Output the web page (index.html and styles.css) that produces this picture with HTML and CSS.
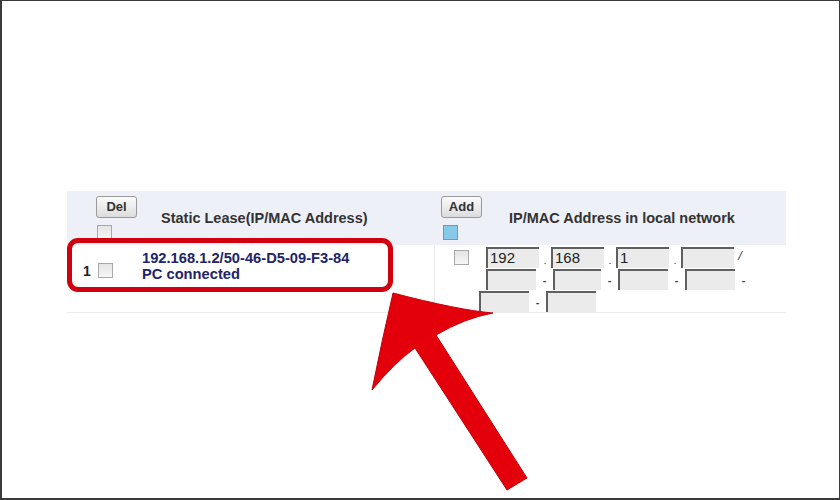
FILE: index.html
```html
<!DOCTYPE html>
<html>
<head>
<meta charset="utf-8">
<link rel="stylesheet" href="styles.css">
</head>
<body>
<div class="frame">
  <div class="table">
    <div class="head">
      <div class="cell left-head">
        <div class="ctrl">
          <span class="btn">Del</span>
          <span class="cb"></span>
        </div>
        <div class="title t1">Static Lease(IP/MAC Address)</div>
      </div>
      <div class="cell right-head">
        <div class="ctrl">
          <span class="btn">Add</span>
          <span class="cb blue"></span>
        </div>
        <div class="title t2">IP/MAC Address in local network</div>
      </div>
    </div>
    <div class="row">
      <div class="cell left-row">
        <span class="num">1</span>
        <span class="cb"></span>
        <div class="lease">
          <div>192.168.1.2/50-46-D5-09-F3-84</div>
          <div>PC connected</div>
        </div>
      </div>
      <div class="cell right-row">
        <span class="cb cb2"></span>
        <div class="fields">
          <div class="line l1">
            <span class="inp">192</span><span class="sep">.</span>
            <span class="inp">168</span><span class="sep">.</span>
            <span class="inp">1</span><span class="sep">.</span>
            <span class="inp"></span><span class="sep slash">/</span>
          </div>
          <div class="line l2">
            <span class="inp w50"></span><span class="sep dash">-</span>
            <span class="inp w48"></span><span class="sep dash">-</span>
            <span class="inp w50"></span><span class="sep dash">-</span>
            <span class="inp w50"></span><span class="sep dash">-</span>
          </div>
          <div class="line l3">
            <span class="inp w50"></span><span class="sep dash">-</span>
            <span class="inp w50"></span>
          </div>
        </div>
      </div>
    </div>
  </div>
  <div class="highlight"></div>
  <svg class="arrow" width="840" height="500" viewBox="0 0 840 500">
    <path d="M393 293 Q458 310 493 313 Q465 318 436 335 L527 478 L507 490 L415 348 Q395 362 372 390 Q382 340 393 293 Z" fill="#e3000b" stroke="#c40008" stroke-width="1"/>
  </svg>
</div>
</body>
</html>
```

FILE: styles.css
```css
html, body {
  margin: 0;
  padding: 0;
  background: #fff;
}
.frame {
  position: relative;
  width: 840px;
  height: 500px;
  box-sizing: border-box;
  border: 1px solid #3a3a3a;
  border-left-width: 2px;
  border-bottom-width: 2px;
  padding: 190px 0 0 65px;
  font-family: "Liberation Sans", Arial, sans-serif;
  overflow: hidden;
}
.table {
  width: 719px;
}
.head {
  display: flex;
  height: 54px;
  background: #eef0f8;
}
.row {
  display: flex;
  height: 67px;
  border-bottom: 1px solid #ececec;
}
.left-head, .left-row {
  width: 367px;
  box-sizing: border-box;
}
.right-head, .right-row {
  flex: 1;
  box-sizing: border-box;
}
.right-row {
  border-left: 1px solid #ececec;
}
.cell {
  display: flex;
}
.left-head {
  padding: 5px 0 0 29px;
}
.right-head {
  padding: 5px 0 0 7px;
}
.ctrl {
  display: flex;
  flex-direction: column;
  align-items: flex-start;
  gap: 7px;
}
.btn {
  display: block;
  box-sizing: border-box;
  width: 41px;
  height: 22px;
  border: 1px solid #9a9a9a;
  border-radius: 3px;
  background: linear-gradient(#fbfbfb, #dcdcdc);
  font-size: 13px;
  font-weight: bold;
  line-height: 19px;
  text-align: center;
  color: #333;
}
.cb {
  display: block;
  box-sizing: border-box;
  width: 15px;
  height: 15px;
  border: 1px solid #a8a8a8;
  background: linear-gradient(#e4e4e4, #f6f6f6);
  margin-left: 1px;
}
.cb.blue {
  margin-left: 2px;
  border-color: #4aa6d4;
  background: #86c9e8;
}
.title {
  align-self: center;
  font-size: 14.5px;
  font-weight: bold;
  color: #333;
  margin-top: -5px;
}
.t1 {
  margin-left: 24px;
}
.t2 {
  margin-left: 27px;
}
.left-row {
  padding: 5px 0 0 16px;
  align-items: flex-start;
}
.num {
  font-size: 14px;
  font-weight: bold;
  color: #222;
  margin-top: 13px;
  width: 14px;
}
.left-row .cb {
  margin-top: 13px;
}
.lease {
  margin-left: 29px;
  font-size: 14.7px;
  font-weight: bold;
  color: #1f2466;
  line-height: 16px;
  margin-top: 0;
}
.right-row {
  padding: 2px 0 0 18px;
  align-items: flex-start;
}
.cb2 {
  margin-top: 3px;
}
.fields {
  margin-left: 17px;
}
.line {
  display: flex;
  align-items: flex-start;
  height: 22px;
}
.l3 {
  margin-left: -7px;
}
.inp {
  display: block;
  box-sizing: border-box;
  width: 53px;
  height: 21px;
  background: #ebebeb;
  border-top: 2px solid #606060;
  border-left: 2px solid #606060;
  font-size: 15px;
  line-height: 18px;
  padding-left: 2px;
  color: #222;
}
.w50 { width: 50px; }
.w48 { width: 48px; }
.sep {
  width: 12px;
  text-align: center;
  font-size: 11px;
  color: #444;
  line-height: 26px;
}
.dash {
  font-weight: bold;
  width: 17px;
  line-height: 22px;
}
.slash {
  font-size: 13px;
  line-height: 18px;
  font-style: italic;
}
.highlight {
  position: absolute;
  left: 65px;
  top: 237px;
  width: 326px;
  height: 54px;
  box-sizing: border-box;
  border: 5px solid #d0000e;
  border-radius: 11px;
}
.arrow {
  position: absolute;
  left: -2px;
  top: -1px;
}
```
